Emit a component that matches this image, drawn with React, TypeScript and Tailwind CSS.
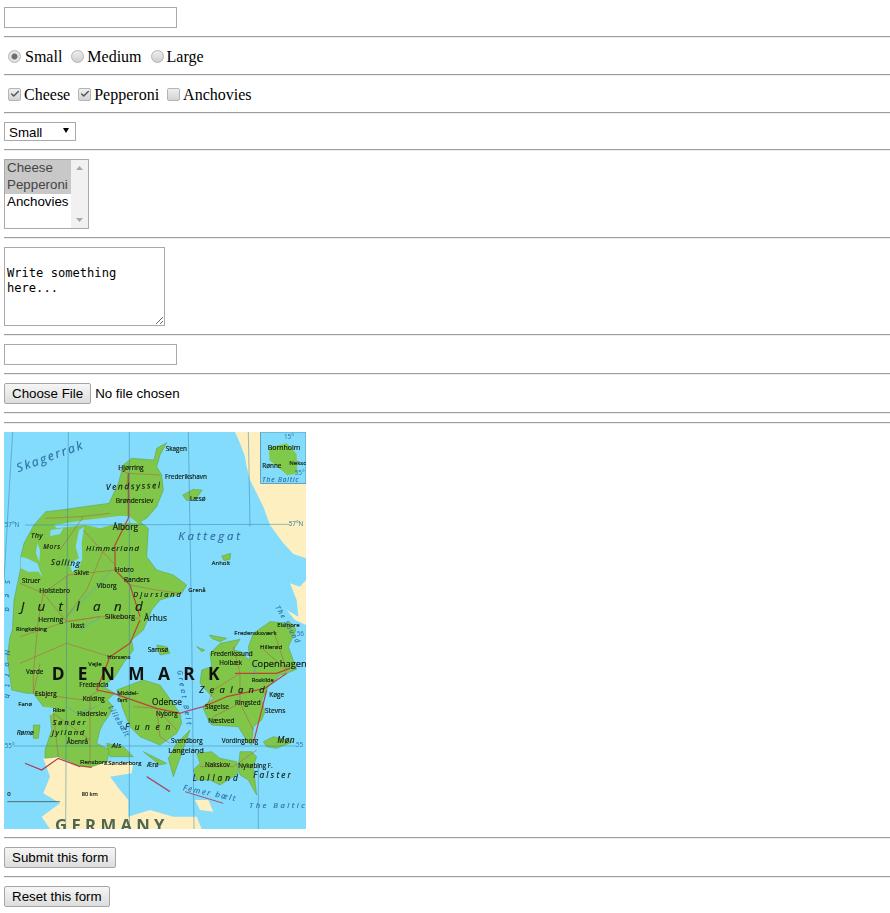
import { Check } from 'lucide-react'

// map is laid out in 3x pixels, offset to the crop of the reference
const mainRoads = [
  '385,130 385,265 345,345 345,420 390,465 420,560',
  '420,570 390,640 330,680 290,780',
  '290,780 340,790 470,835 540,850',
  '610,830 680,800 795,775 860,730',
  '705,730 830,730 870,715',
  '800,780 760,940',
  '240,1008 275,1012',
]

const sideRoads = [
  '385,130 480,135',
  '355,118 385,130 380,170',
  '345,420 205,435 130,490 60,460',
  '390,465 470,480 540,490',
  '200,440 200,575 300,560 420,565',
  '130,490 115,570 100,730 100,790',
  '720,820 760,900',
  '620,830 640,780 720,730',
  '100,790 250,810 300,780',
  '137,265 240,260 330,250',
  '470,835 480,920 510,940',
  '600,1010 700,1010 770,960',
  '270,800 270,1005',
  '160,850 270,930',
  '160,850 175,980',
  '60,620 200,575',
  '130,490 200,575 300,560',
  '180,360 250,260',
  '250,300 340,400',
  '720,730 720,820 640,860',
  '400,830 470,835 530,900',
  '700,650 720,730',
  '780,650 860,720',
  '820,600 860,720',
  '310,360 260,480 200,560',
  '60,700 200,640 330,680',
  '100,790 120,700',
]

const blue = '#2f6ea5'
const ink = '#101a10'
const labels: [string, number, number, number][] = [
  ['Skagen', 497, 62, 19],
  ['Hjørring', 355, 120, 20],
  ['Frederikshavn', 495, 146, 19],
  ['Brønderslev', 347, 220, 20],
  ['Læsø', 570, 212, 19],
  ['Ålborg', 338, 300, 25],
  ['Skive', 222, 434, 19],
  ['Hobro', 345, 426, 19],
  ['Anholt', 635, 405, 18],
  ['Struer', 66, 460, 19],
  ['Randers', 372, 456, 20],
  ['Viborg', 290, 474, 20],
  ['Holstebro', 118, 488, 20],
  ['Grenå', 565, 487, 18],
  ['Silkeborg', 315, 566, 21],
  ['Århus', 432, 574, 25],
  ['Herning', 115, 576, 20],
  ['Ikast', 212, 594, 19],
  ['Elsinore', 832, 590, 18],
  ['Ringkøbing', 48, 604, 18],
  ['Bornholm', 803, 60, 21],
  ['Rønne', 787, 115, 19],
  ['Nekso', 868, 104, 18],
  ['Fredensksværk', 703, 614, 18],
  ['Hillerød', 780, 656, 18],
  ['Samsø', 443, 666, 20],
  ['Frederikssund', 632, 678, 19],
  ['Holbæk', 658, 706, 19],
  ['Copenhagen', 755, 712, 28],
  ['Horsens', 322, 688, 18],
  ['Vejle', 265, 708, 18],
  ['Varde', 78, 732, 19],
  ['Fredericia', 238, 770, 19],
  ['Roskilde', 755, 755, 17],
  ['Esbjerg', 105, 798, 19],
  ['Kolding', 248, 812, 19],
  ['Middel-', 352, 795, 18],
  ['fart', 352, 815, 18],
  ['Køge', 808, 802, 19],
  ['Fanø', 55, 828, 18],
  ['Ribe', 158, 847, 18],
  ['Odense', 456, 826, 25],
  ['Ringsted', 705, 824, 19],
  ['Nyborg', 468, 858, 19],
  ['Slagelse', 615, 838, 19],
  ['Stevns', 795, 848, 20],
  ['Haderslev', 232, 858, 19],
  ['Næstved', 625, 878, 19],
  ['Åbenrå', 200, 942, 19],
  ['Svendborg', 513, 938, 19],
  ['Vordingborg', 665, 938, 19],
  ['Langeland', 505, 968, 22],
  ['Flensborg', 240, 1003, 18],
  ['Sønderborg', 325, 1005, 18],
  ['Ærø', 440, 1010, 19],
  ['Nakskov', 615, 1012, 19],
  ['Nykøbing F.', 715, 1015, 19],
  ['80 km', 245, 1097, 17],
  ['0', 22, 1097, 18],
]

const italicLabels: [string, number, number, number, string, number, number?][] = [
  ['Skagerrak', 55, 127, 36, blue, 6, -20],
  ['Vendsyssel', 318, 180, 25, ink, 5, -2],
  ['Kattegat', 535, 330, 34, blue, 8.5],
  ['Thy', 92, 325, 22, ink, 1],
  ['Mors', 130, 356, 20, ink, 2],
  ['Himmerland', 258, 364, 23, ink, 3.5],
  ['Salling', 152, 404, 24, ink, 3, 3],
  ['Djursland', 400, 502, 22, ink, 6],
  ['Jutland', 62, 542, 40, ink, 40],
  ['Zealand', 598, 788, 28, ink, 16],
  ['Sønder', 158, 886, 22, ink, 6],
  ['Jylland', 155, 914, 23, ink, 5],
  ['Funen', 375, 900, 25, ink, 17],
  ['Rømø', 50, 916, 20, ink, 0],
  ['Als', 335, 954, 22, ink, 1],
  ['Møn', 832, 940, 25, ink, 1],
  ['Lolland', 578, 1052, 25, ink, 9],
  ['Falster', 760, 1044, 25, ink, 6.5],
  ['The Baltic', 787, 157, 19, blue, 3],
  ['Femer bælt', 548, 1080, 23, blue, 5, 12],
  ['The Baltic', 748, 1135, 23, blue, 7.5],
  ['Sea', 16, 450, 22, blue, 30, 90],
  ['North', 16, 660, 22, blue, 22, 90],
  ['Great Belt', 532, 722, 21, blue, 8, 80],
  ['Lillebælt', 325, 832, 21, blue, 3, 60],
  ['The Sound', 826, 532, 20, blue, 4, 60],
]

const degrees: [string, number, number][] = [
  ['57°N', 14, 290],
  ['57°N', 866, 288],
  ['15°', 852, 26],
  ['55°', 884, 136],
  ['55°', 14, 955],
  ['55', 888, 952],
  ['56', 890, 618],
]

function DenmarkMap() {
  return (
    <svg viewBox="12 6 906 1191" className="h-[397px] w-[302px] blur-[0.25px]" fontFamily="'Open Sans', 'Liberation Sans', sans-serif">
      <rect x="12" y="6" width="906" height="1191" fill="#83dcfb" />

      {/* Sweden and Germany */}
      <g fill="#fdefbf">
        <polygon points="705,6 782,6 782,130 918,160 918,385 880,372 850,340 810,285 790,230 770,190 750,150 740,110 735,80 720,40" />
        <polygon points="870,460 900,470 918,450 918,585 885,570 860,540 895,560 890,510" />
        <polygon points="130,985 175,980 240,1008 275,1010 320,995 400,1000 395,1030 330,1040 360,1080 385,1110 385,1160 450,1140 520,1160 590,1160 605,1197 150,1197 125,1160 180,1120 130,1090 150,1040" />
        <polygon points="585,1110 625,1110 640,1145 600,1140" />
      </g>
      <g fill="#83dcfb">
        <polygon points="60,1050 75,1045 80,1075 65,1080" />
      </g>

      {/* Bornholm inset */}
      <rect x="782" y="6" width="136" height="154" fill="#83dcfb" stroke="#3a80a8" strokeWidth="2" />
      <polygon points="808,52 860,40 890,72 892,130 862,136 808,90" fill="#7fc94b" />

      {/* land */}
      <g fill="#80c648" stroke="#5a9c48" strokeWidth="1.5" strokeLinejoin="round">
        <polygon points="500,38 470,55 462,90 395,85 370,105 355,160 327,220 252,230 182,240 137,245 102,285 72,340 62,380 62,415 42,510 37,600 30,620 22,680 28,730 35,780 80,790 100,790 130,830 150,850 155,900 135,960 135,985 175,980 240,1008 275,1010 320,995 330,960 290,940 300,900 310,880 325,860 340,830 322,810 345,790 310,770 345,740 370,700 400,660 395,630 430,600 455,540 480,510 545,490 560,465 520,435 470,420 440,380 445,295 420,275 440,265 470,230 490,180 485,135 470,110 480,75" />
        <polygon points="548,195 580,178 606,180 590,205 560,212" />
        <polygon points="665,378 692,370 690,388 672,392" />
        <polygon points="350,780 390,765 430,750 480,765 505,800 540,850 545,880 530,910 480,945 420,920 390,890 370,840" />
        <polygon points="630,670 660,640 720,628 700,660 725,665 735,680 750,690 745,650 760,610 810,575 875,580 888,600 865,650 890,718 860,730 840,735 805,770 785,810 795,845 785,870 760,890 755,945 742,935 715,890 635,885 625,870 608,830 640,805 600,760 605,720 635,710" />
        <polygon points="628,615 680,625 660,635 635,625" />
        <polygon points="590,650 615,660 605,665" />
        <polygon points="590,970 635,965 660,985 710,995 715,1030 660,1065 630,1050 590,1050 580,1020 600,1000" />
        <polygon points="720,965 755,965 770,980 760,1010 770,1095 745,1050 720,1035 715,1010" />
        <polygon points="570,900 520,1040 505,985 530,940" />
        <polygon points="430,965 500,1000 480,1005" />
        <polygon points="320,940 370,950 400,980 330,980" />
        <polygon points="790,935 820,920 880,935 830,955 800,950" />
        <polygon points="100,885 120,885 115,925 100,925" />
        <polygon points="470,645 500,650 510,670 480,675" />
      </g>

      {/* Limfjord and other water on the land */}
      <g fill="#83dcfb">
        <polygon points="162,285 255,270 357,258 385,258 415,280 385,278 335,285 300,295 255,285 170,295" />
        <polygon points="152,300 190,295 180,312 150,318" />
        <polygon points="237,300 252,290 245,340 247,385 237,415 217,425 207,400 237,385 227,350" />
        <polygon points="62,380 80,385 112,400 127,440 115,425 85,425 62,415" />
        <polygon points="112,340 120,360 118,395 108,370" />
        <polygon points="130,830 170,835 155,855 130,850" />
      </g>

      {/* rivers */}
      <g fill="none" stroke="#4da6d8" strokeWidth="2">
        <polyline points="330,425 290,470 260,500 200,560" />
        <polyline points="300,565 270,580 240,600" />
        <polyline points="200,830 230,850 290,830" />
        <polyline points="770,700 760,740" />
      </g>

      {/* roads */}
      <g fill="none" stroke="#a9714a" strokeWidth="2" strokeLinejoin="round">
        {sideRoads.map((r) => (
          <polyline key={r} points={r} />
        ))}
      </g>
      <g fill="none" stroke="#b8443a" strokeWidth="3.5" strokeLinejoin="round">
        {mainRoads.map((r) => (
          <polyline key={r} points={r} />
        ))}
      </g>
      <polyline points="540,850 555,845 610,830" fill="none" stroke="#a8506c" strokeWidth="3.5" />
      <polyline points="75,1000 125,1020 175,985 240,1010" fill="none" stroke="#b0384a" strokeWidth="3.5" />
      <polyline points="440,1040 510,1085" fill="none" stroke="#a8506c" strokeWidth="4" />
      <polyline points="555,1085 670,1120" fill="none" stroke="#a8506c" strokeWidth="3" />

      {/* grid */}
      <g fill="none" stroke="#3a80a8" strokeWidth="1.5">
        <polyline points="38,6 12,450" />
        <polyline points="205,6 200,600 197,1197" />
        <polyline points="388,6 388,1197" />
        <polyline points="565,6 575,600 582,1197" />
        <polyline points="745,6 750,290" />
        <polyline points="775,1000 775,1197" />
        <polyline points="75,285 870,283" />
        <polyline points="40,948 890,948" />
      </g>
      <polyline points="22,1115 180,1115" fill="none" stroke="#333" strokeWidth="2" />

      {/* place names */}
      <g stroke={ink} strokeWidth="0.5">
        {labels.map(([t, x, y, s]) => (
          <text key={t + x} x={x} y={y} fontSize={s} fill={ink}>
            {t}
          </text>
        ))}
      </g>
      {italicLabels.map(([t, x, y, s, c, ls, rot]) => (
        <text
          key={t + x}
          x={x}
          y={y}
          fontSize={s}
          fill={c}
          stroke={c}
          strokeWidth="0.5"
          fontStyle="italic"
          letterSpacing={ls}
          transform={rot ? `rotate(${rot} ${x} ${y})` : undefined}
        >
          {t}
        </text>
      ))}
      {degrees.map(([t, x, y]) => (
        <text key={t + x + y} x={x} y={y} fontSize={19} fill={blue}>
          {t}
        </text>
      ))}
      <text x="155" y="750" fontSize="52" fontWeight="700" letterSpacing="40" fill="#111">
        DENMARK
      </text>
      <text x="165" y="1203" fontSize="50" fontWeight="700" letterSpacing="13" fill="#4f6650">
        GERMANY
      </text>
    </svg>
  )
}

function Rule() {
  return <hr className="h-[2px] border-t border-b-0 border-[#9c9c9c] bg-[#eeeeee]" />
}

function Radio({ checked }: { checked?: boolean }) {
  return (
    <input
      type="radio"
      name="size"
      disabled
      defaultChecked={checked}
      className={`h-[13px] w-[13px] appearance-none rounded-full border border-[#b4b4b4] ${
        checked
          ? 'bg-[radial-gradient(circle,#6e6e6e_0,#6e6e6e_2.5px,#e4e4e4_3.5px)]'
          : 'bg-gradient-to-b from-[#eeeeee] to-[#cfcfcf]'
      }`}
    />
  )
}

function Checkbox({ checked }: { checked?: boolean }) {
  return (
    <span className="relative flex h-[13px] w-[13px]">
      <input
        type="checkbox"
        disabled
        defaultChecked={checked}
        className="h-[13px] w-[13px] appearance-none rounded-[2px] border border-[#b4b4b4] bg-gradient-to-b from-[#eeeeee] to-[#d4d4d4]"
      />
      {checked && (
        <Check size={10} strokeWidth={3.5} className="absolute left-[1.5px] top-[1.5px] text-[#555555]" />
      )}
    </span>
  )
}

const btn =
  'h-[21px] rounded-[2px] border border-[#a6a6a6] bg-gradient-to-b from-[#f6f6f6] to-[#dddddd] px-[7px] text-[13.33px] text-black'

export default function App() {
  return (
    <form className="flex flex-col gap-2 pb-[6px] pl-1 pt-[7px] font-['Liberation_Sans',sans-serif] text-[13.33px] text-black">
      <input type="text" className="h-[21px] w-[173px] border border-[#a9a9a9] bg-white" />
      <Rule />

      <div className="flex h-5 items-center pl-1 font-['Liberation_Serif',serif] text-base">
        <Radio checked />
        <span className="ml-1 pt-[2px]">Small</span>
        <span className="ml-[9px] flex"><Radio /></span>
        <span className="ml-[3px] pt-[2px]">Medium</span>
        <span className="ml-[9px] flex"><Radio /></span>
        <span className="ml-[3px] pt-[2px]">Large</span>
      </div>
      <Rule />

      <div className="flex h-5 items-center pl-1 font-['Liberation_Serif',serif] text-base">
        <Checkbox checked />
        <span className="ml-[3px] pt-[2px]">Cheese</span>
        <span className="ml-2"><Checkbox checked /></span>
        <span className="ml-[3px] pt-[2px]">Pepperoni</span>
        <span className="ml-2"><Checkbox /></span>
        <span className="ml-[3px] pt-[2px]">Anchovies</span>
      </div>
      <Rule />

      <div className="relative h-[19px] w-[72px]">
        <select className="h-[19px] w-[72px] appearance-none border border-[#a9a9a9] bg-white pb-[3px] pl-1 text-[13.33px]">
          <option>Small</option>
          <option>Medium</option>
          <option>Large</option>
        </select>
        <svg viewBox="0 0 6 5" className="pointer-events-none absolute left-[59px] top-[6px] h-[5px] w-[6px]">
          <polygon points="0,0 6,0 3,5" fill="#000" />
        </svg>
      </div>
      <Rule />

      {/* multiple select, with its idle scrollbar */}
      <div className="flex h-[70px] w-[85px] border border-[#a9a9a9] bg-white leading-[15px]">
        <div className="flex w-[66px] flex-col">
          <div className="h-[17px] bg-[#c8c8c8] pl-[2px] text-[#444444]">Cheese</div>
          <div className="h-[17px] bg-[#c8c8c8] pl-[2px] text-[#444444]">Pepperoni</div>
          <div className="h-[17px] pl-[2px]">Anchovies</div>
        </div>
        <div className="flex flex-1 flex-col items-center justify-between bg-[#f1f1f1] py-[6px]">
          <svg viewBox="0 0 7 4" className="h-1 w-[7px]">
            <polygon points="3.5,0 7,4 0,4" fill="#a8a8a8" />
          </svg>
          <svg viewBox="0 0 7 4" className="h-1 w-[7px]">
            <polygon points="0,0 7,0 3.5,4" fill="#a8a8a8" />
          </svg>
        </div>
      </div>
      <Rule />

      <textarea
        defaultValue={'\nWrite something here...'}
        className="h-[79px] w-[161px] border border-[#a9a9a9] bg-white px-[2px] pb-[2px] pt-[3px] font-['DejaVu_Sans_Mono',monospace] text-[12.1px] leading-[15px]"
      />
      <Rule />

      <input type="text" className="h-[21px] w-[173px] border border-[#a9a9a9] bg-white" />
      <Rule />

      <input
        type="file"
        className="h-[21px] text-[13.33px] file:mr-1 file:h-[21px] file:rounded-[2px] file:border file:border-solid file:border-[#a6a6a6] file:bg-gradient-to-b file:from-[#f6f6f6] file:to-[#dddddd] file:px-[7px] file:text-[13.33px] file:text-black"
      />
      <Rule />
      <Rule />

      <DenmarkMap />
      <Rule />

      <div>
        <button type="submit" className={btn}>Submit this form</button>
      </div>
      <Rule />

      <div>
        <button type="reset" className={btn}>Reset this form</button>
      </div>
    </form>
  )
}
